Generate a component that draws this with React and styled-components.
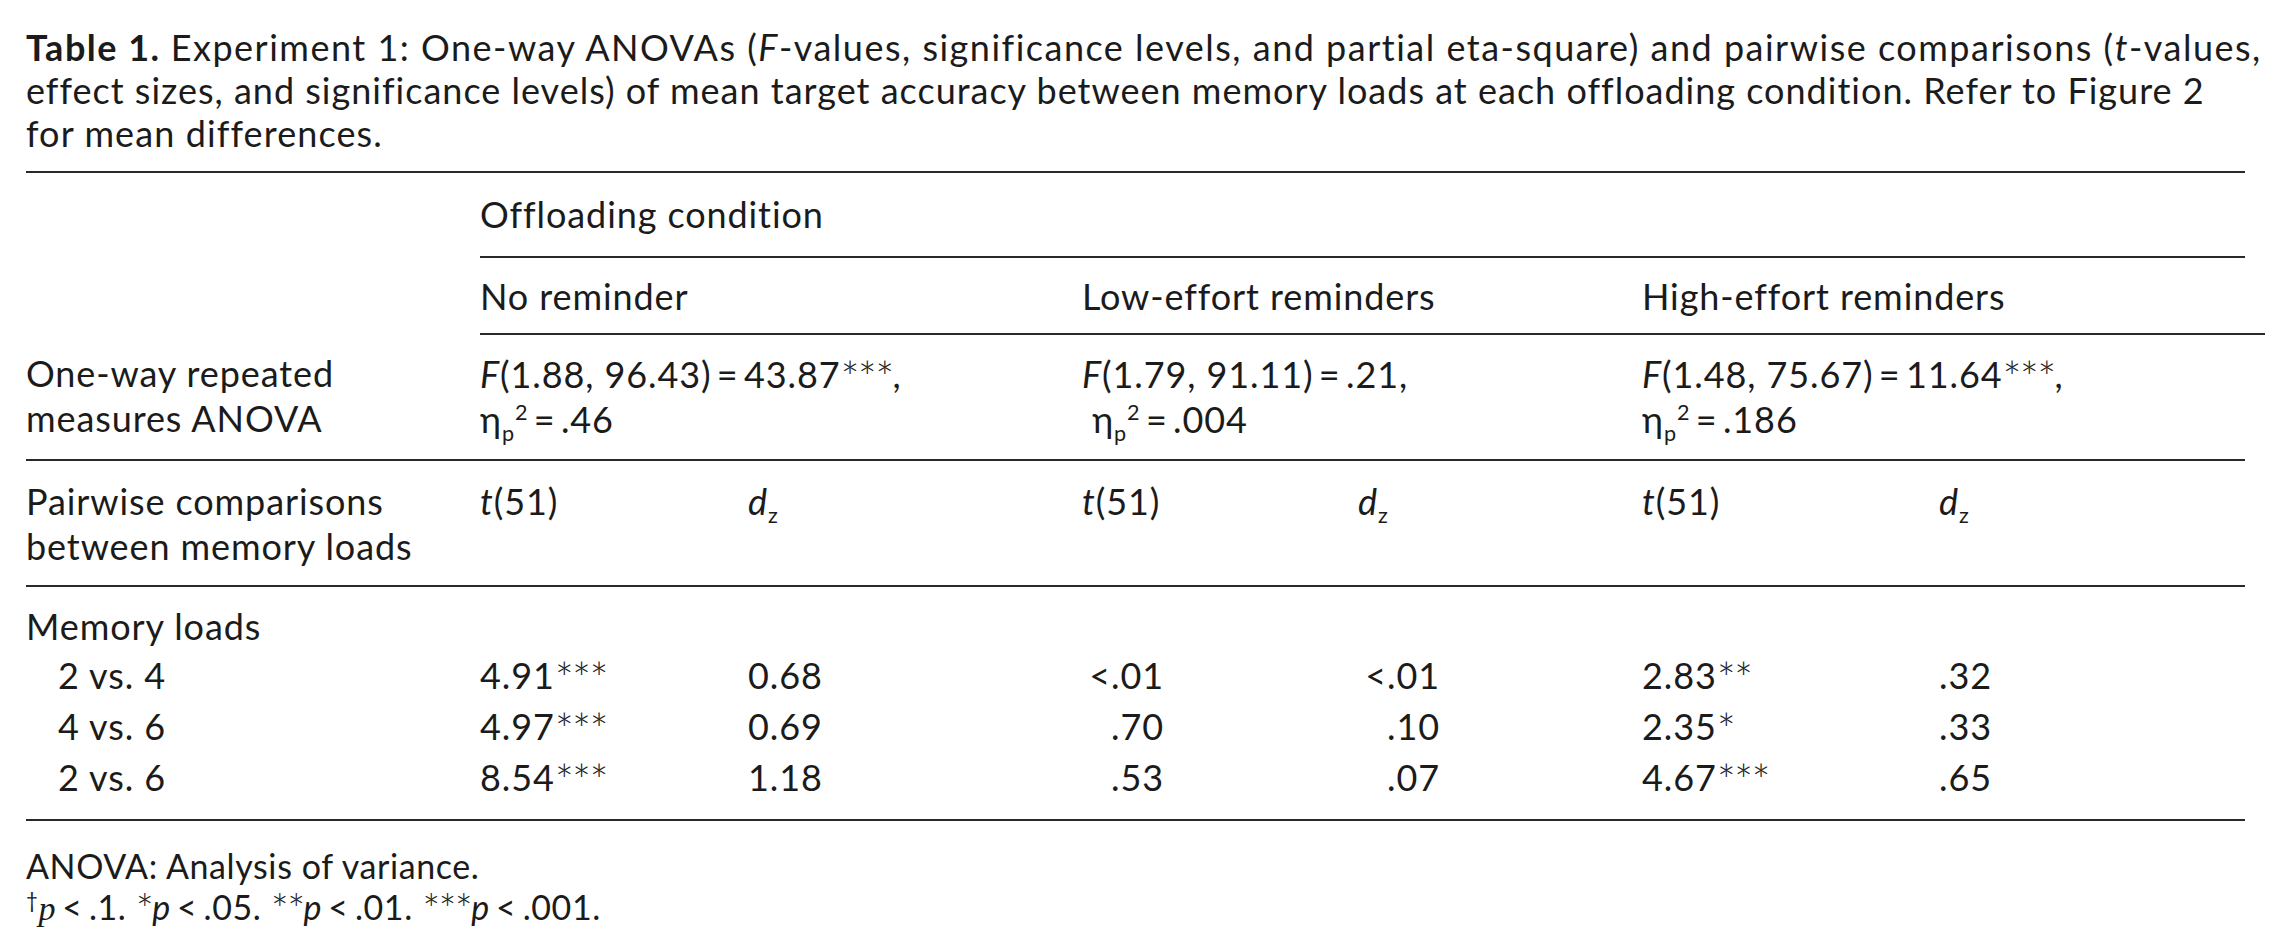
import React from "react";
import styled, { createGlobalStyle } from "styled-components";

const GlobalStyle = createGlobalStyle`
  html, body {
    margin: 0;
    padding: 0;
    background: #ffffff;
  }
  body {
    font-family: "Lato", "Open Sans", sans-serif;
    color: #1b1b1b;
  }
`;

const Page = styled.div`
  padding: 26px 0 0 26px;
  width: 2219px;
`;

const Caption = styled.p`
  margin: 0 0 16px 0;
  font-size: 36px;
  line-height: 43px;
  white-space: nowrap;
`;

const CaptionLine = styled.span`
  display: block;
  letter-spacing: ${(p) => p.$ls || "1.1px"};
`;

const CaptionLabel = styled.span`
  font-weight: 700;
  margin-right: 10px;
`;

const Table = styled.table`
  width: 2219px;
  border-collapse: collapse;
  table-layout: fixed;
  font-size: 36px;
  letter-spacing: 0.9px;
  line-height: 45px;
  border-top: 2px solid #2a2a2a;
  border-bottom: 2px solid #2a2a2a;
`;

const Row = styled.tr`
  border-bottom: ${(p) => (p.$rule ? "2px solid #2a2a2a" : "none")};
`;

const Cell = styled.td`
  padding: ${(p) => p.$pad || "16px 0 14px"};
  padding-left: ${(p) => (p.$indent ? "32px" : "0")};
  text-align: left;
  vertical-align: top;
  white-space: nowrap;
  border-bottom: ${(p) => (p.$underline ? "2px solid #2a2a2a" : "none")};
  position: relative;
  &::after {
    content: "";
    display: ${(p) => (p.$overhang ? "block" : "none")};
    position: absolute;
    right: -20px;
    bottom: -2px;
    width: 20px;
    height: 2px;
    background: #2a2a2a;
  }
`;

const Right = styled.span`
  display: inline-block;
  width: ${(p) => p.$w || "82px"};
  text-align: right;
`;

const Stars = styled.span`
  font-size: 1.25em;
  font-weight: 300;
  line-height: 0;
  vertical-align: -0.14em;
  letter-spacing: -0.04em;
`;

const Sub = styled.sub`
  font-size: 0.6em;
  vertical-align: -0.38em;
  line-height: 0;
  font-style: normal;
`;

const Sup = styled.sup`
  font-size: 0.6em;
  vertical-align: 0.6em;
  line-height: 0;
`;

const Notes = styled.div`
  margin-top: 24px;
  font-size: 34px;
  letter-spacing: 0.6px;
  line-height: 41px;
`;

const SerifP = styled.i`
  font-family: "Liberation Serif", "DejaVu Serif", serif;
`;

const Lt = () => <>{"\u2006<\u2006"}</>;

const Eta = () => (
  <>
    η<Sub>p</Sub>
    <Sup>2</Sup>
  </>
);

const Dz = () => (
  <>
    <i>d</i>
    <Sub>z</Sub>
  </>
);

const cols = [454, 268, 334, 276, 284, 297, 306];

const pairs = [
  { label: "2 vs. 4", n: ["4.91", "***"], nd: "0.68", l: "<.01", ld: "<.01", h: ["2.83", "**"], hd: ".32" },
  { label: "4 vs. 6", n: ["4.97", "***"], nd: "0.69", l: ".70", ld: ".10", h: ["2.35", "*"], hd: ".33" },
  { label: "2 vs. 6", n: ["8.54", "***"], nd: "1.18", l: ".53", ld: ".07", h: ["4.67", "***"], hd: ".65" },
];

export default function App() {
  return (
    <Page>
      <GlobalStyle />
      <Caption>
        <CaptionLine $ls="1.5px">
          <CaptionLabel>Table 1.</CaptionLabel>
          Experiment 1: One-way ANOVAs (<i>F</i>-values, significance levels, and partial eta-square) and pairwise
          comparisons (<i>t</i>-values,
        </CaptionLine>
        <CaptionLine $ls="1px">
          effect sizes, and significance levels) of mean target accuracy between memory loads at each offloading
          condition. Refer to Figure 2
        </CaptionLine>
        <CaptionLine>for mean differences.</CaptionLine>
      </Caption>

      <Table>
        <colgroup>
          {cols.map((w, i) => (
            <col key={i} style={{ width: w }} />
          ))}
        </colgroup>
        <tbody>
          <Row>
            <Cell />
            <Cell colSpan={6} $underline $pad="19px 0">
              Offloading condition
            </Cell>
          </Row>
          <Row>
            <Cell />
            <Cell colSpan={2} $underline>
              No reminder
            </Cell>
            <Cell colSpan={2} $underline>
              Low-effort reminders
            </Cell>
            <Cell colSpan={2} $underline $overhang>
              High-effort reminders
            </Cell>
          </Row>
          <Row $rule>
            <Cell $pad="17px 0 17px">
              One-way repeated
              <br />
              measures ANOVA
            </Cell>
            <Cell colSpan={2} $pad="17px 0 17px">
              <i>F</i>(1.88, 96.43)&thinsp;=&thinsp;43.87<Stars>***</Stars>,
              <br />
              <Eta />
              &thinsp;=&thinsp;.46
            </Cell>
            <Cell colSpan={2} $pad="17px 0 17px">
              <i>F</i>(1.79, 91.11)&thinsp;=&thinsp;.21,
              <br />
              &nbsp;<Eta />
              &thinsp;=&thinsp;.004
            </Cell>
            <Cell colSpan={2} $pad="17px 0 17px">
              <i>F</i>(1.48, 75.67)&thinsp;=&thinsp;11.64<Stars>***</Stars>,
              <br />
              <Eta />
              &thinsp;=&thinsp;.186
            </Cell>
          </Row>
          <Row $rule>
            <Cell $pad="18px 0 16px">
              Pairwise comparisons
              <br />
              between memory loads
            </Cell>
            <Cell $pad="18px 0 16px">
              <i>t</i>(51)
            </Cell>
            <Cell $pad="18px 0 16px">
              <Dz />
            </Cell>
            <Cell $pad="18px 0 16px">
              <i>t</i>(51)
            </Cell>
            <Cell $pad="18px 0 16px">
              <Dz />
            </Cell>
            <Cell $pad="18px 0 16px">
              <i>t</i>(51)
            </Cell>
            <Cell $pad="18px 0 16px">
              <Dz />
            </Cell>
          </Row>
          <Row>
            <Cell colSpan={7} $pad="17px 0 0">
              Memory loads
            </Cell>
          </Row>
          {pairs.map((r, i) => {
            const pad = i === pairs.length - 1 ? "4px 0 19px" : "4px 0 2px";
            return (
              <Row key={r.label}>
                <Cell $indent $pad={pad}>
                  {r.label}
                </Cell>
                <Cell $pad={pad}>
                  {r.n[0]}
                  <Stars>{r.n[1]}</Stars>
                </Cell>
                <Cell $pad={pad}>{r.nd}</Cell>
                <Cell $pad={pad}>
                  <Right>{r.l}</Right>
                </Cell>
                <Cell $pad={pad}>
                  <Right>{r.ld}</Right>
                </Cell>
                <Cell $pad={pad}>
                  {r.h[0]}
                  <Stars>{r.h[1]}</Stars>
                </Cell>
                <Cell $pad={pad}>{r.hd}</Cell>
              </Row>
            );
          })}
        </tbody>
      </Table>

      <Notes>
        ANOVA: Analysis of variance.
        <br />
        <Sup>†</Sup>
        <SerifP>p</SerifP>
        <Lt />
        .1. <Stars>*</Stars>
        <i>p</i>
        <Lt />
        .05. <Stars>**</Stars>
        <i>p</i>
        <Lt />
        .01. <Stars>***</Stars>
        <i>p</i>
        <Lt />
        .001.
      </Notes>
    </Page>
  );
}
